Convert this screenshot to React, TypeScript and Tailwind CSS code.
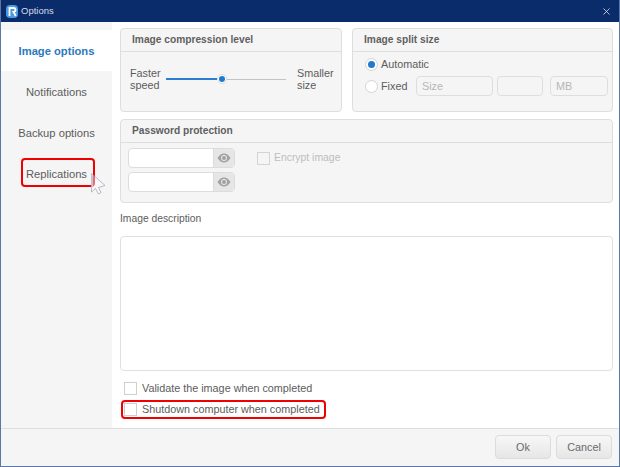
import { X } from "lucide-react";

function Eye() {
  return (
    <svg width="14" height="10" viewBox="0 0 14 10">
      <path d="M0.5 5C2.5 1.8 4.6 0.5 7 0.5S11.5 1.8 13.500 5C11.500 8.200 9.400 9.500 7 9.500S2.500 8.200 0.500 5Z" fill="#a3a3a3" />
      <circle cx="7" cy="5" r="3" fill="#e6e6e6" />
      <circle cx="7" cy="5" r="2" fill="#a3a3a3" />
    </svg>
  );
}

function Logo() {
  return (
    <svg width="12" height="13" viewBox="0 0 12 13">
      <rect x="0" y="0" width="12" height="13" rx="4" fill="#4a9be0" />
      <path d="M3.500 11V3H7.500C9 3 9.500 3.800 9.500 5C9.500 6.200 8.700 7 7.500 7L9.800 11" fill="none" stroke="#ffffff" strokeWidth="1.800" />
    </svg>
  );
}

function Cursor() {
  return (
    <svg width="16" height="22" viewBox="0 0 16 22" className="absolute left-[90px] top-[173px]">
      <path d="M0.500 0.500V19L4.500 15.500L7.500 21L10 19.500L7.500 14.500L14 12.500Z" fill="#ffffff" fillOpacity="0.4" stroke="#98a0ad" strokeWidth="0.700" />
      <path d="M0.500 1V15.500L2 14V3Z" fill="#b9c9e0" />
    </svg>
  );
}

function PasswordInput() {
  return (
    <div className="flex h-[20px] w-[107px] rounded-[4px] border border-[#dcdcdc] bg-white">
      <div className="flex-1" />
      <div className="flex w-[21px] items-center justify-center rounded-r-[3px] border-l border-[#dcdcdc] bg-[#e6e6e6]">
        <Eye />
      </div>
    </div>
  );
}

function Panel({ title, className, children }: { title: string; className: string; children: React.ReactNode }) {
  return (
    <section className={`h-[84px] rounded-[4px] border border-[#dedede] bg-[#f5f5f5] ${className}`}>
      <h2 className="flex h-[23px] items-center border-b border-[#dedede] pl-[11px] text-[10.200px] font-bold text-[#5f5f5f]">
        {title}
      </h2>
      {children}
    </section>
  );
}

function Field({ text, className }: { text?: string; className: string }) {
  return (
    <div className={`flex h-[20px] items-center rounded-[4px] border border-[#dedede] px-[5px] text-[#b5b5b5] ${className}`}>
      {text}
    </div>
  );
}

export default function App() {
  const sidebar = ["Notifications", "Backup options", "Replications"];

  return (
    <div className="relative flex h-[467px] w-[620px] flex-col overflow-hidden border-x border-b border-[#5b77a6] bg-white font-['Liberation_Sans',Arial,sans-serif] text-[10.800px] text-[#5c5c5c]">
      <header className="-mx-px flex h-[22px] shrink-0 items-center bg-[#0b2c6b] pl-[6px] pr-[8px] text-[9.500px] text-[#d5dbe8]">
        <Logo />
        <span className="ml-[3px] flex-1">Options</span>
        <X size={11} strokeWidth={1.500} className="text-white" />
      </header>

      <div className="flex flex-1">
        <nav className="w-[111px] shrink-0 bg-[#f5f5f5] pt-[8px] text-[11.200px]">
          <div className="flex h-[41px] items-center justify-center bg-white pt-[1px] font-bold text-[#2a79bd]">
            Image options
          </div>
          {sidebar.map((item) => (
            <div key={item} className="flex h-[41px] items-center justify-center pt-[1px] text-[#5c5c5c]">
              {item}
            </div>
          ))}
        </nav>

        <main className="flex-1 pl-[8px] pr-[7px] pt-[6px]">
          <div className="flex gap-[10px]">
            <Panel title="Image compression level" className="w-[222px]">
              <div className="flex items-center pl-[9px] pt-[15px] leading-[12px]">
                <span className="w-[36px]">Faster speed</span>
                <div className="flex w-[120px] items-center">
                  <div className="h-[2px] w-[51px] bg-[#2a7fd0]" />
                  <div className="flex h-[10px] w-[10px] items-center justify-center rounded-full border border-[#dcdcdc] bg-white">
                    <div className="h-[6px] w-[6px] rounded-full bg-[#1f7ad0]" />
                  </div>
                  <div className="h-px flex-1 bg-[#c4c4c4]" />
                </div>
                <span className="ml-[11px] w-[36px]">Smaller size</span>
              </div>
            </Panel>
            <Panel title="Image split size" className="w-[261px]">
              <div className="pl-[12px] pt-[2px]">
                <div className="flex h-[21px] items-center gap-[3px]">
                  <div className="flex h-[13px] w-[13px] items-center justify-center rounded-full border border-[#d4d4d4] bg-white">
                    <div className="h-[7px] w-[7px] rounded-full bg-[#1f7ad0]" />
                  </div>
                  Automatic
                </div>
                <div className="flex h-[22px] items-center">
                  <div className="mr-[3px] h-[13px] w-[13px] rounded-full border border-[#d4d4d4] bg-white" />
                  <span className="w-[35px]">Fixed</span>
                  <Field text="Size" className="w-[77px]" />
                  <Field className="ml-[4px] w-[46px]" />
                  <Field text="MB" className="ml-[7px] w-[58px]" />
                </div>
              </div>
            </Panel>
          </div>

          <Panel title="Password protection" className="mt-[7px] w-[493px]">
            <div className="flex pl-[7px] pt-[5px]">
              <div className="flex flex-col gap-[4px]">
                <PasswordInput />
                <PasswordInput />
              </div>
              <div className="ml-[22px] flex h-[20px] items-center gap-[4px] text-[10.400px] text-[#bdbdbd]">
                <div className="h-[13px] w-[13px] border border-[#d4d4d4]" />
                Encrypt image
              </div>
            </div>
          </Panel>

          <p className="mt-[9px] h-[24px] text-[10.300px] leading-[14px]">Image description</p>
          <div className="h-[135px] w-[493px] rounded-[4px] border border-[#e0e0e0] bg-white" />

          <div className="mt-[9px] pl-[4px]">
            <div className="flex h-[17px] items-center gap-[5px]">
              <div className="h-[13px] w-[13px] border border-[#cfcfcf]" />
              Validate the image when completed
            </div>
            <div className="mt-[4px] flex h-[17px] items-center gap-[5px]">
              <div className="h-[13px] w-[13px] border border-[#cfcfcf]" />
              Shutdown computer when completed
            </div>
          </div>
        </main>
      </div>

      <footer className="flex h-[38px] shrink-0 justify-end gap-[5px] border-t border-[#dedede] bg-[#f5f5f5] pr-[7px] pt-[6px]">
        <button className="h-[24px] w-[56px] rounded-[4px] border border-[#dcdcdc] bg-gradient-to-b from-[#f7f7f7] to-[#e6e6e6] text-[#6b6b6b]">
          Ok
        </button>
        <button className="h-[24px] w-[56px] rounded-[4px] border border-[#dcdcdc] bg-gradient-to-b from-[#f7f7f7] to-[#e6e6e6] text-[#6b6b6b]">
          Cancel
        </button>
      </footer>

      <div className="absolute left-[20px] top-[158px] h-[29px] w-[74px] rounded-[4px] border-2 border-[#f00000]" />
      <div className="absolute left-[120px] top-[400px] h-[19px] w-[205px] rounded-[4px] border-2 border-[#f00000]" />
      <Cursor />
    </div>
  );
}
